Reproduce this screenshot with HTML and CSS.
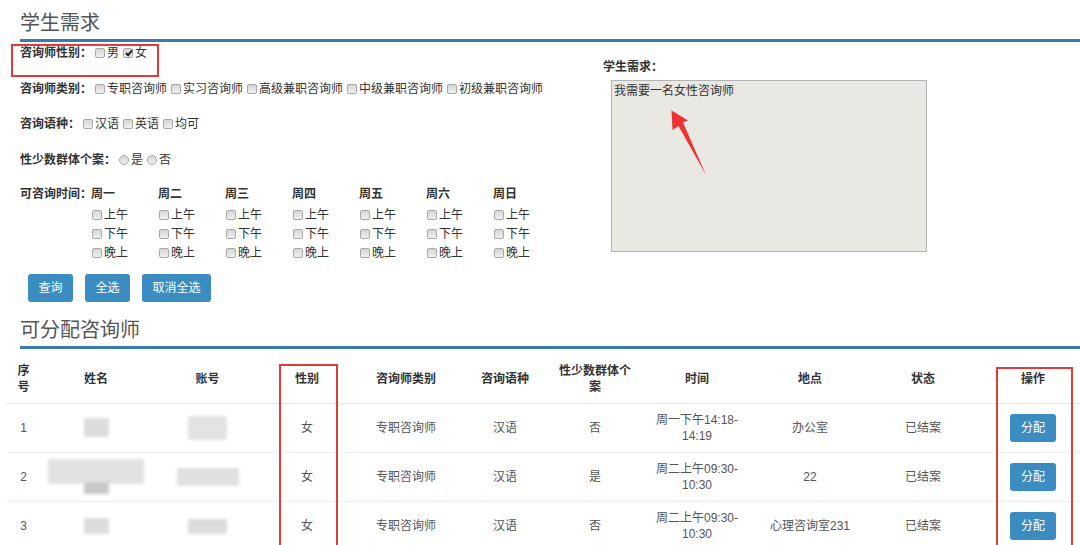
FILE: index.html
```html
<!DOCTYPE html>
<html lang="zh-CN">
<head>
<meta charset="utf-8">
<title>学生需求</title>
<link rel="stylesheet" href="styles.css">
</head>
<body>
<div class="page">
  <h2 class="sec-title">学生需求</h2>
  <div class="top">
    <div class="form">
      <div class="row first"><span class="lbl">咨询师性别：</span><label class="opt"><input type="checkbox">男</label><label class="opt"><input type="checkbox" checked>女</label></div>
      <div class="row"><span class="lbl">咨询师类别：</span><label class="opt"><input type="checkbox">专职咨询师</label><label class="opt"><input type="checkbox">实习咨询师</label><label class="opt"><input type="checkbox">高级兼职咨询师</label><label class="opt"><input type="checkbox">中级兼职咨询师</label><label class="opt"><input type="checkbox">初级兼职咨询师</label></div>
      <div class="row"><span class="lbl">咨询语种：</span><label class="opt"><input type="checkbox">汉语</label><label class="opt"><input type="checkbox">英语</label><label class="opt"><input type="checkbox">均可</label></div>
      <div class="row"><span class="lbl">性少数群体个案：</span><label class="opt"><input type="radio" name="lgbt">是</label><label class="opt"><input type="radio" name="lgbt">否</label></div>
      <div class="time">
        <span class="lbl time-lbl">可咨询时间：</span>
        <div class="days">
          <div class="day"><div class="dname">周一</div><label class="opt"><input type="checkbox">上午</label><label class="opt"><input type="checkbox">下午</label><label class="opt"><input type="checkbox">晚上</label></div>
          <div class="day"><div class="dname">周二</div><label class="opt"><input type="checkbox">上午</label><label class="opt"><input type="checkbox">下午</label><label class="opt"><input type="checkbox">晚上</label></div>
          <div class="day"><div class="dname">周三</div><label class="opt"><input type="checkbox">上午</label><label class="opt"><input type="checkbox">下午</label><label class="opt"><input type="checkbox">晚上</label></div>
          <div class="day"><div class="dname">周四</div><label class="opt"><input type="checkbox">上午</label><label class="opt"><input type="checkbox">下午</label><label class="opt"><input type="checkbox">晚上</label></div>
          <div class="day"><div class="dname">周五</div><label class="opt"><input type="checkbox">上午</label><label class="opt"><input type="checkbox">下午</label><label class="opt"><input type="checkbox">晚上</label></div>
          <div class="day"><div class="dname">周六</div><label class="opt"><input type="checkbox">上午</label><label class="opt"><input type="checkbox">下午</label><label class="opt"><input type="checkbox">晚上</label></div>
          <div class="day"><div class="dname">周日</div><label class="opt"><input type="checkbox">上午</label><label class="opt"><input type="checkbox">下午</label><label class="opt"><input type="checkbox">晚上</label></div>
        </div>
      </div>
      <div class="btns"><button class="btn">查询</button><button class="btn">全选</button><button class="btn">取消全选</button></div>
    </div>
    <div class="need">
      <div class="need-lbl">学生需求：</div>
      <textarea class="need-box" readonly>我需要一名女性咨询师</textarea>
    </div>
  </div>

  <h2 class="sec-title second">可分配咨询师</h2>
  <table class="tbl">
    <colgroup>
      <col class="c1"><col class="c2"><col class="c3"><col class="c4"><col class="c5"><col class="c6"><col class="c7"><col class="c8"><col class="c9"><col class="c10"><col class="c11">
    </colgroup>
    <thead>
      <tr><th>序号</th><th>姓名</th><th>账号</th><th>性别</th><th>咨询师类别</th><th>咨询语种</th><th>性少数群体个案</th><th>时间</th><th>地点</th><th>状态</th><th>操作</th></tr>
    </thead>
    <tbody>
      <tr>
        <td>1</td>
        <td><span class="blur b-name"></span></td>
        <td><span class="blur b-acc1"></span></td>
        <td>女</td><td>专职咨询师</td><td>汉语</td><td>否</td>
        <td>周一下午14:18-<wbr>14:19</td><td>办公室</td><td>已结案</td>
        <td><button class="btn">分配</button></td>
      </tr>
      <tr>
        <td>2</td>
        <td><div class="blob"><span class="blur b-big"></span><span class="blur b-small"></span></div></td>
        <td><span class="blur b-acc2"></span></td>
        <td>女</td><td>专职咨询师</td><td>汉语</td><td>是</td>
        <td>周二上午09:30-<wbr>10:30</td><td>22</td><td>已结案</td>
        <td><button class="btn">分配</button></td>
      </tr>
      <tr>
        <td>3</td>
        <td><span class="blur b-name3"></span></td>
        <td><span class="blur b-acc3"></span></td>
        <td>女</td><td>专职咨询师</td><td>汉语</td><td>否</td>
        <td>周二上午09:30-<wbr>10:30</td><td>心理咨询室231</td><td>已结案</td>
        <td><button class="btn">分配</button></td>
      </tr>
    </tbody>
  </table>

  <div class="anno anno-gender"></div>
  <div class="anno anno-col"></div>
  <div class="anno anno-op"></div>
  <svg class="arrow" width="1080" height="545" viewBox="0 0 1080 545">
    <polygon points="671.5,101.5 688,111.5 683,113.5 706,166 678.5,117 672.5,121" fill="#ef3131"/>
  </svg>
</div>
</body>
</html>
```

FILE: styles.css
```css
html, body {
  margin: 0;
  padding: 0;
  overflow: hidden;
  background: #fff;
}
body {
  width: 1080px;
  height: 545px;
  font-family: "Liberation Sans", "Noto Sans CJK SC", sans-serif;
  font-size: 12px;
  color: #333;
}
.page {
  position: relative;
  width: 1080px;
  height: 545px;
}
.sec-title {
  margin: 9px 0 0 20px;
  font-size: 20px;
  font-weight: normal;
  color: #555;
  line-height: 28px;
  padding-bottom: 2px;
  border-bottom: 3px solid #3a78b6;
}
.sec-title.second {
  margin-top: 14px;
}
.top {
  display: flex;
  margin-left: 20px;
}
.form {
  width: 583px;
  flex: none;
}
.row {
  display: flex;
  align-items: center;
  line-height: 18px;
  margin-top: 17.5px;
  white-space: nowrap;
}
.row.first {
  margin-top: 2px;
}
.lbl {
  font-weight: bold;
  margin-right: 3px;
}
.opt {
  display: inline-flex;
  align-items: center;
  margin-right: 4px;
}
.opt input {
  -webkit-appearance: none;
  appearance: none;
  box-sizing: border-box;
  width: 10px;
  height: 10px;
  margin: 0 2px 0 0;
  border: 1px solid #a8a8a8;
  border-radius: 2px;
  background: linear-gradient(#d6d6d6, #f0f0f0);
  position: relative;
  flex: none;
}
.opt input[type="radio"] {
  border-radius: 50%;
}
.opt input:checked::after {
  content: "";
  position: absolute;
  left: 2.5px;
  top: 0;
  width: 2px;
  height: 5px;
  border: solid #222;
  border-width: 0 2px 2px 0;
  transform: rotate(40deg);
}
.time {
  display: flex;
  margin-top: 16px;
}
.time-lbl {
  width: 71px;
  flex: none;
  margin: 0;
  line-height: 18px;
  white-space: nowrap;
}
.days {
  display: grid;
  grid-template-columns: repeat(7, 67px);
}
.dname {
  font-weight: bold;
  line-height: 18px;
  margin-bottom: 3px;
}
.day .opt {
  display: flex;
  line-height: 19px;
  margin: 0 0 0 1px;
}
.btns {
  display: flex;
  gap: 12px;
  margin: 11px 0 0 8px;
}
.btn {
  height: 28px;
  padding: 0 10.5px;
  border: none;
  border-radius: 3px;
  background: #3a8cc1;
  color: #fff;
  font-family: "Liberation Sans", "Noto Sans CJK SC", sans-serif;
  font-size: 12px;
  line-height: 28px;
  cursor: pointer;
}
.need {
  margin-top: 16px;
}
.need-lbl {
  font-weight: bold;
  line-height: 18px;
}
.need-box {
  display: block;
  box-sizing: border-box;
  width: 316px;
  height: 172px;
  margin: 4px 0 0 8px;
  padding: 2px;
  border: 1px solid #b3b3b3;
  background: #e9e8e3;
  color: #333;
  font-family: "Liberation Sans", "Noto Sans CJK SC", sans-serif;
  font-size: 12px;
  line-height: 16px;
  resize: none;
  outline: none;
}
.tbl {
  margin-left: 7px;
  width: 1080px;
  table-layout: fixed;
  border-collapse: collapse;
}
.c1 { width: 33px; }
.c2 { width: 112px; }
.c3 { width: 111px; }
.c4 { width: 88px; }
.c5 { width: 110px; }
.c6 { width: 88px; }
.c7 { width: 92px; }
.c8 { width: 112px; }
.c9 { width: 114px; }
.c10 { width: 112px; }
.c11 { width: 108px; }
.tbl th {
  font-weight: bold;
  color: #333;
  padding: 14px 8px 8px;
  line-height: 16px;
  text-align: center;
  vertical-align: middle;
  border-bottom: 1px solid #e8e8e8;
}
.tbl td {
  padding: 8px;
  line-height: 16px;
  text-align: center;
  vertical-align: middle;
  color: #555;
  border-top: 1px solid #f0f0f0;
}
.tbl tbody tr {
  height: 48px;
}
.blur {
  display: inline-block;
  vertical-align: middle;
  background: #dcdcdc;
  filter: blur(1.5px);
}
.b-name { width: 25px; height: 19px; }
.b-acc1 { width: 39px; height: 24px; background: #e3e3e3; }
.b-name3 { width: 25px; height: 16px; }
.b-acc3 { width: 39px; height: 15px; }
.b-acc2 { width: 62px; height: 18px; background: #e0e0e0; }
.blob {
  display: flex;
  flex-direction: column;
  align-items: center;
  margin: -5px 0;
}
.b-big { width: 96px; height: 25px; background: #e2e2e2; }
.b-small { width: 25px; height: 12px; margin-top: -2px; background: #c9c9c9; }
.anno {
  position: absolute;
  box-sizing: border-box;
  border: 2px solid #e23b3b;
  pointer-events: none;
}
.anno-gender { left: 11px; top: 35px; width: 148px; height: 33px; }
.anno-col { left: 279px; top: 355px; width: 59px; height: 187px; }
.anno-op { left: 996px; top: 358px; width: 77px; height: 184px; }
.arrow {
  position: absolute;
  left: 0;
  top: 0;
  pointer-events: none;
}
```
